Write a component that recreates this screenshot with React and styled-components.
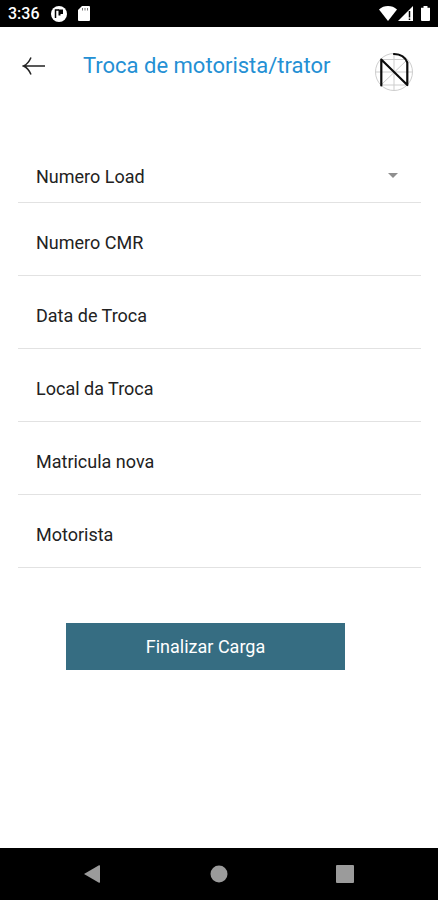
import React from 'react';
import styled, { createGlobalStyle } from 'styled-components';

const fields = [
  { name: 'cmr', label: 'Numero CMR' },
  { name: 'data', label: 'Data de Troca' },
  { name: 'local', label: 'Local da Troca' },
  { name: 'matricula', label: 'Matricula nova' },
  { name: 'motorista', label: 'Motorista' },
];

const Logo = () => (
  <svg width="40" height="40" viewBox="0 0 40 40" fill="none" role="img" aria-label="N">
    <g stroke="#cdcdcd" strokeWidth="1">
      <circle cx="20" cy="20" r="18.5" />
      <path d="M7 7.5h26.5M7 33h26.5M1.5 20h37M20 1.5v37M33.5 7.5L7 33" />
    </g>
    <path
      d="M7.3 33.5V7.5L33.3 33V10.5C31 4.5 26 2.2 20 2"
      stroke="#0c0c0c"
      strokeWidth="2.2"
      strokeLinecap="round"
      strokeLinejoin="round"
    />
  </svg>
);

const BackArrow = () => (
  <svg width="24" height="20" viewBox="0 0 24 20" fill="none" stroke="#222" strokeWidth="1.5">
    <path d="M23 10H2M9 1.5C7.5 5 5 8.5 1.5 10C5 11.5 7.5 15 9 18.5" />
  </svg>
);

const App = () => {
  return (
    <>
      <GlobalStyle />
      <Screen>
        <StatusBar>
          <Clock>3:36</Clock>
          <svg width="16" height="16" viewBox="0 0 16 16" aria-hidden="true">
            <circle cx="8" cy="8" r="8" fill="#fff" />
            <path d="M4.5 12V4H8" fill="none" stroke="#000" strokeWidth="1.5" />
            <path d="M7.5 3.5H12v4.5h-2.500v1.500H7.5z" fill="#000" />
          </svg>
          <svg width="12" height="15" viewBox="0 0 12 15" aria-hidden="true">
            <path d="M4 0h7a1 1 0 0 1 1 1v13a1 1 0 0 1-1 1H1a1 1 0 0 1-1-1V4z" fill="#fff" />
            <path d="M4.5 2v2.5M7 2v2.5M9.5 2v2.5" stroke="#777" strokeWidth="1" />
          </svg>
          <Signals>
            <svg width="18" height="15" viewBox="0 0 18 15" aria-hidden="true">
              <path d="M0 3.5C5-1.1 13-1.1 18 3.5L9 15z" fill="#fff" />
            </svg>
            <svg width="15" height="15" viewBox="0 0 15 15" aria-hidden="true">
              <path d="M15 0v15H0z" fill="#fff" />
              <path d="M11.5 5v6.5M11.5 12.5V14" stroke="#000" strokeWidth="1.5" />
            </svg>
            <Battery />
          </Signals>
        </StatusBar>

        <Header>
          <BackButton type="button" aria-label="Voltar">
            <BackArrow />
          </BackButton>
          <Title>Troca de motorista/trator</Title>
          <Logo />
        </Header>

        <Form onSubmit={e => e.preventDefault()}>
          <SelectWrapper>
            <Select name="load" aria-label="Numero Load" defaultValue="">
              <option value="">Numero Load</option>
            </Select>
            <Caret width="10" height="5" viewBox="0 0 10 5" aria-hidden="true">
              <path d="M0 0h10L5 5z" fill="#8f8f8f" />
            </Caret>
          </SelectWrapper>
          {fields.map(field => (
            <Input
              key={field.name}
              type="text"
              name={field.name}
              placeholder={field.label}
              aria-label={field.label}
            />
          ))}
          <SubmitButton type="submit">Finalizar Carga</SubmitButton>
        </Form>

        <NavBar>
          <NavButton type="button" aria-label="Anterior">
            <svg width="18" height="18" viewBox="0 0 18 18" fill="#9b9b9b">
              <path d="M0 9L15 0.3Q16 0 16 1V17Q16 18 15 17.7z" />
            </svg>
          </NavButton>
          <NavButton type="button" aria-label="Inicio">
            <svg width="18" height="18" viewBox="0 0 18 18" fill="#9b9b9b">
              <circle cx="9" cy="9" r="8.5" />
            </svg>
          </NavButton>
          <NavButton type="button" aria-label="Recentes">
            <svg width="18" height="18" viewBox="0 0 18 18" fill="#9b9b9b">
              <rect width="18" height="18" rx="1" />
            </svg>
          </NavButton>
        </NavBar>
      </Screen>
    </>
  );
};

const GlobalStyle = createGlobalStyle`
  * {
    box-sizing: border-box;
  }

  body {
    margin: 0;
    background-color: #fff;
    font-family: Roboto, sans-serif;
  }

  button, input, select {
    font-family: inherit;
  }
`;

const Screen = styled.div`
  display: flex;
  flex-direction: column;
  min-height: 100vh;
`;

const StatusBar = styled.div`
  display: flex;
  align-items: center;
  gap: 11px;
  height: 27px;
  padding: 0 8px;
  background-color: #000;
  color: #fff;
`;

const Clock = styled.span`
  font-size: 16px;
  font-weight: 500;
`;

const Signals = styled.div`
  display: flex;
  align-items: center;
  gap: 1px;
  margin-left: auto;
`;

const Battery = styled.span`
  width: 9px;
  height: 15px;
  margin-left: 7px;
  border-radius: 1px;
  background-color: #fff;
  clip-path: polygon(0 12%, 28% 12%, 28% 0, 72% 0, 72% 12%, 100% 12%, 100% 100%, 0 100%);
`;

const Header = styled.header`
  display: flex;
  align-items: center;
  padding: 23px 24px 0 16px;
`;

const BackButton = styled.button`
  display: flex;
  padding: 6px;
  border: none;
  background: none;
  margin-bottom: 12px;
`;

const Title = styled.h1`
  flex: 1;
  margin: 0 0 12px;
  padding-left: 31px;
  color: #2490d4;
  font-size: 22px;
  font-weight: 400;
  line-height: 28px;
`;

const Form = styled.form`
  display: flex;
  flex-direction: column;
  flex: 1;
  padding: 55px 17px 32px 18px;
`;

const SelectWrapper = styled.div`
  display: flex;
  align-items: center;
  position: relative;
  height: 54px;
  border-bottom: 1px solid #e2e2e2;
`;

const Select = styled.select`
  width: 100%;
  height: 100%;
  padding: 2px 40px 0 18px;
  border: none;
  outline: none;
  appearance: none;
  background: none;
  color: #222;
  font-size: 18px;
`;

const Caret = styled.svg`
  position: absolute;
  right: 23px;
  pointer-events: none;
`;

const Input = styled.input`
  width: 100%;
  height: 73px;
  padding: 6px 18px 0;
  border: none;
  border-bottom: 1px solid #e2e2e2;
  outline: none;
  background: none;
  color: #222;
  font-size: 18px;

  &::placeholder {
    color: #222;
    opacity: 1;
  }
`;

const SubmitButton = styled.button`
  height: 47px;
  margin: 55px 76px 0 48px;
  border: none;
  background-color: #366d82;
  color: #fff;
  font-size: 18px;
`;

const NavBar = styled.nav`
  display: flex;
  align-items: center;
  justify-content: space-between;
  height: 52px;
  padding: 0 78px;
  background-color: #000;
`;

const NavButton = styled.button`
  display: flex;
  padding: 6px;
  border: none;
  background: none;
`;

export default App;
